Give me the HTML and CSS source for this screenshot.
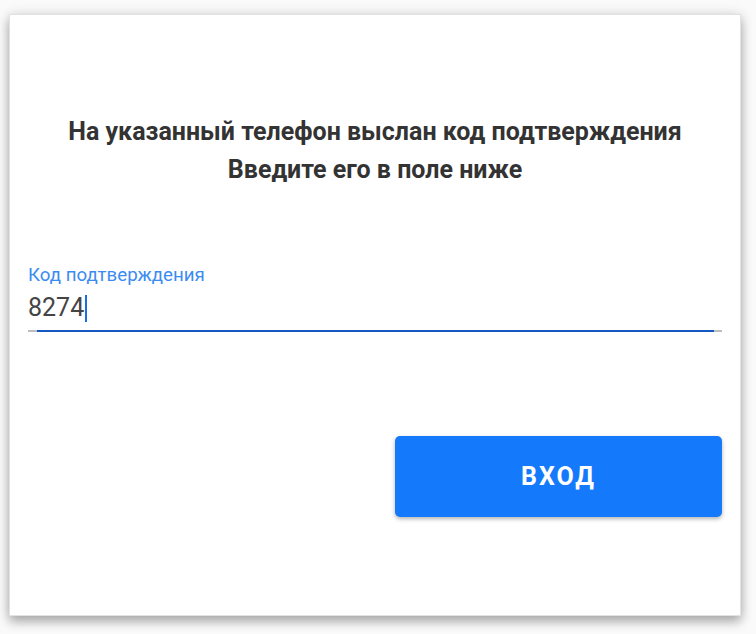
FILE: index.html
```html
<!DOCTYPE html>
<html lang="ru">
<head>
    <meta charset="UTF-8">
    <title>Подтверждение</title>
    <link rel="stylesheet" href="styles.css">
</head>
<body>
<div class="card">
    <div class="card-title">
        <p>На указанный телефон выслан код подтверждения</p>
        <p>Введите его в поле ниже</p>
    </div>
    <div class="field">
        <label class="field-label">Код подтверждения</label>
        <div class="field-value">8274<span class="caret"></span></div>
        <div class="field-line"><div class="field-line-active"></div></div>
    </div>
    <div class="actions">
        <button class="btn-login">Вход</button>
    </div>
</div>
</body>
</html>
```

FILE: styles.css
```css
html, body {
    margin: 0;
    background-color: #fafafa;
}
body {
    font-family: 'Roboto', 'Liberation Sans', sans-serif;
    padding: 14px 15px 18px 9px;
}
.card {
    width: 732px;
    height: 602px;
    box-sizing: border-box;
    background-color: white;
    border: 1px solid #e2e2e2;
    box-shadow: 0 6px 10px rgba(0, 0, 0, 0.28), 0 0 12px rgba(0, 0, 0, 0.12);
    padding: 98px 18px 0 18px;
}
.card-title {
    text-align: center;
    color: #333;
    font-size: 25px;
    font-weight: bold;
    line-height: 38px;
}
.card-title p {
    margin: 0;
}
.field {
    margin-top: 77px;
}
.field-label {
    display: block;
    color: #3b8cf0;
    font-size: 18.7px;
    line-height: 18px;
}
.field-value {
    margin-top: 9px;
    font-size: 25px;
    line-height: 30px;
    color: #444;
    display: flex;
    align-items: center;
}
.caret {
    display: inline-block;
    width: 1.5px;
    height: 27px;
    background-color: #1a6fe0;
    margin-left: 1px;
}
.field-line {
    margin-top: 7px;
    height: 2px;
    background-color: #bdbdbd;
    display: flex;
    justify-content: center;
    padding: 0 8px 0 9px;
}
.field-line-active {
    flex: 1;
    background-color: #1558c4;
}
.actions {
    margin-top: 104px;
    display: flex;
    justify-content: flex-end;
}
.btn-login {
    width: 327px;
    height: 81px;
    border: none;
    border-radius: 5px;
    background-color: #1479fb;
    color: white;
    font-family: 'Roboto', 'Liberation Sans', sans-serif;
    font-size: 25px;
    font-weight: bold;
    letter-spacing: 2px;
    text-transform: uppercase;
    box-shadow: 0 2px 4px rgba(0, 0, 0, 0.3);
    cursor: pointer;
}
```
